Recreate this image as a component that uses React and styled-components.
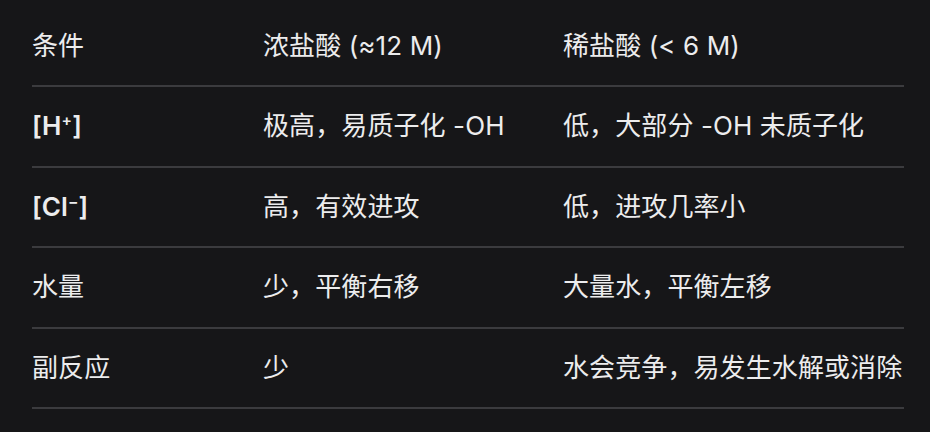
import React from 'react';
import styled, { createGlobalStyle } from 'styled-components';

const GlobalStyle = createGlobalStyle`
    html, body {
        margin: 0;
        padding: 0;
        background: #161618;
    }
    body {
        font-family: Inter, "Noto Sans CJK SC", sans-serif;
        color: #ececed;
    }
`;

const Page = styled.div`
    padding: 6.5px 26px 0 32px;
    min-height: 100vh;
    box-sizing: border-box;
    background: #161618;
`;

const Table = styled.div`
    display: flex;
    flex-direction: column;
    width: 872px;
`;

const Row = styled.div`
    display: grid;
    grid-template-columns: 231px 300px 1fr;
    align-items: center;
    height: 80.5px;
    box-sizing: border-box;
    border-bottom: 2px solid #3b3b3e;
`;

const Cell = styled.div`
    font-size: 26px;
    line-height: 1.3;
    white-space: nowrap;
    font-weight: ${(props) => (props.$bold ? 600 : 400)};
    letter-spacing: 0.1px;
`;

const Sup = styled.sup`
    font-size: 0.6em;
    vertical-align: 0.55em;
    line-height: 0;
`;

const rows = [
    { a: '条件', b: '浓盐酸 (≈12 M)', c: '稀盐酸 (< 6 M)' },
    { a: <>[H<Sup>+</Sup>]</>, bold: true, b: '极高，易质子化 -OH', c: '低，大部分 -OH 未质子化' },
    { a: <>[Cl<Sup>−</Sup>]</>, bold: true, b: '高，有效进攻', c: '低，进攻几率小' },
    { a: '水量', b: '少，平衡右移', c: '大量水，平衡左移' },
    { a: '副反应', b: '少', c: '水会竞争，易发生水解或消除' },
];

const App = () => (
    <>
        <GlobalStyle />
        <Page>
            <Table>
                {rows.map((r, i) => (
                    <Row key={i}>
                        <Cell $bold={r.bold}>{r.a}</Cell>
                        <Cell>{r.b}</Cell>
                        <Cell>{r.c}</Cell>
                    </Row>
                ))}
            </Table>
        </Page>
    </>
);

export default App;
